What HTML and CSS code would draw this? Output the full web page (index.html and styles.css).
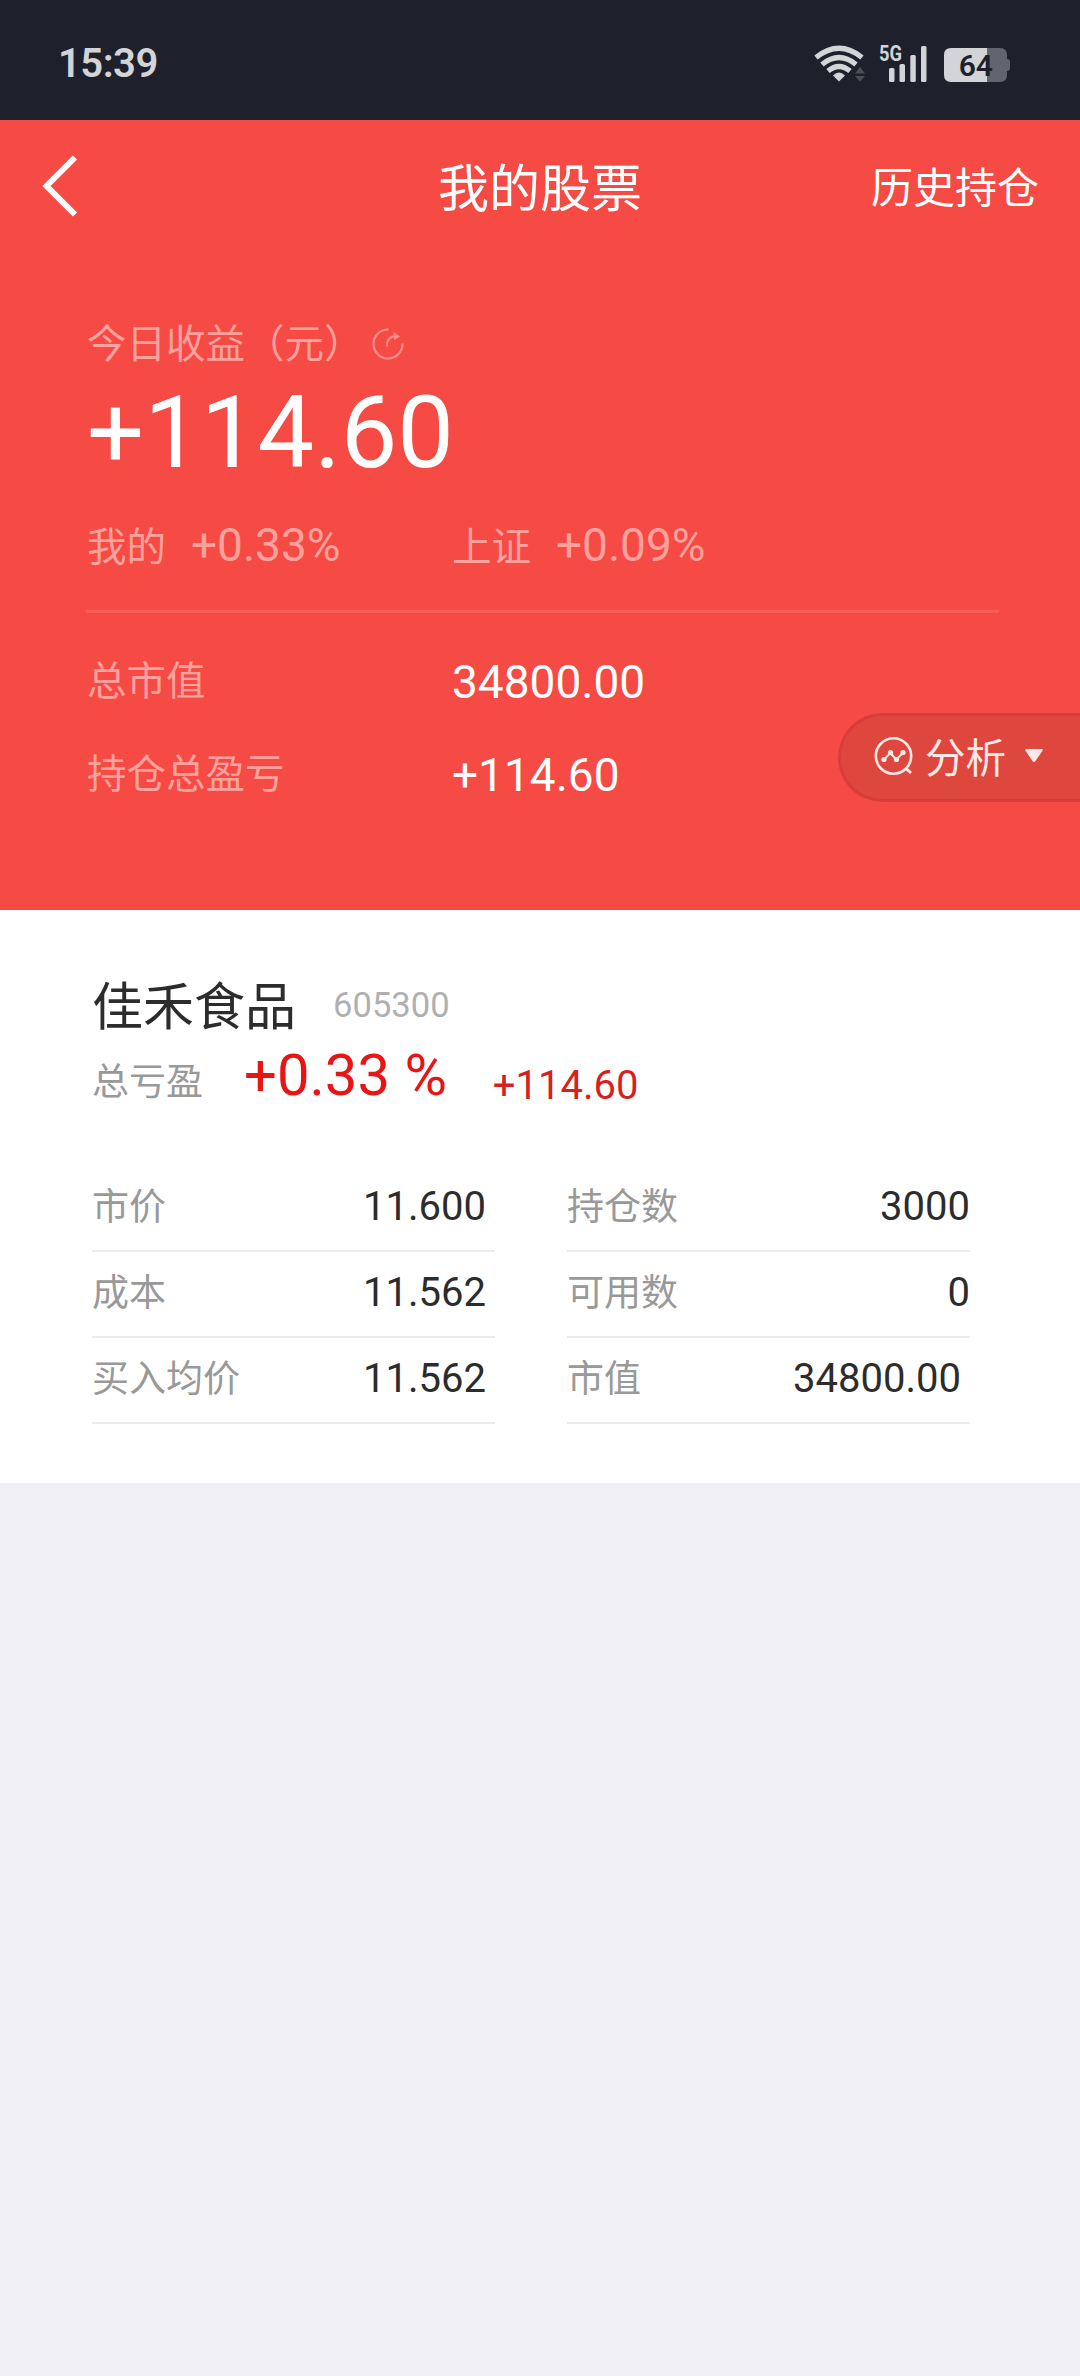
FILE: index.html
```html
<!DOCTYPE html>
<html lang="zh-CN">
<head>
<meta charset="utf-8">
<title>我的股票</title>
<link rel="stylesheet" href="styles.css">
</head>
<body>
<div class="status">
  <span class="clock">15:39</span>
  <svg class="status-icons" width="200" height="44" viewBox="812 42 200 44">
    <g fill="none" stroke="#d2d4d7" stroke-width="5.2">
      <path d="M816 57.5Q839 39 862 57.5"/>
      <path d="M822 64.5Q839 50.500 856 64.500"/>
      <path d="M828 71Q839 62 850 71"/>
    </g>
    <path d="M833 75.500Q839 69.500 845 75.500L839 81.500Z" fill="#d2d4d7"/>
    <path d="M855 73.500l5-6.500 5 6.500zM855 76l5 5.500 5-5.500z" fill="#4b4e57"/>
    <text class="net" x="879" y="61" textLength="23" lengthAdjust="spacingAndGlyphs">5G</text>
    <g fill="#d2d4d7">
      <rect x="889" y="68" width="5.500" height="14" rx="1.500"/>
      <rect x="899.500" y="64" width="5.500" height="18" rx="1.500"/>
      <rect x="910.300" y="55" width="5.500" height="27" rx="1.500"/>
      <rect x="921" y="46" width="5.500" height="36" rx="1.500"/>
    </g>
    <path d="M987 48h13q7 0 7 7v4q3 0 3 3v6q0 3-3 3v4q0 7-7 7h-13z" fill="#62656d"/>
    <path d="M987 48h-16-20q-7 0-7 7v20q0 7 7 7h36z" fill="#d2d4d7"/>
    <text class="level" x="975.800" y="76" text-anchor="middle">64</text>
  </svg>
</div>

<section class="hero">
  <header class="nav">
    <svg class="back" width="38" height="62" viewBox="0 0 38 62"><path d="M34 2.500L5.500 31 34 59.500" fill="none" stroke="#fff" stroke-width="6"/></svg>
    <h1 class="title">我的股票</h1>
    <span class="history">历史持仓</span>
  </header>
  <div class="summary">
    <div class="today">
      <span class="label">今日收益（元）</span>
      <svg width="34" height="34" viewBox="0 0 34 34" fill="none" stroke="#fa8f8b" stroke-width="2.200"><path d="M17.500 2.500A14.500 14.500 0 1 0 31.500 16.500"/><path d="M16 19.500q-.500-9 8-10.500"/><path d="M22.500 5l6.500 4.500-6 3.500z" fill="#fa8f8b" stroke="none"/></svg>
    </div>
    <div class="profit">+114.60</div>
    <div class="rates">
      <div class="rate"><span class="label">我的</span><span class="pct">+0.33%</span></div>
      <div class="rate"><span class="label">上证</span><span class="pct">+0.09%</span></div>
    </div>
    <div class="totals">
      <div class="total"><span class="label">总市值</span><span class="amount">34800.00</span></div>
      <div class="total"><span class="label">持仓总盈亏</span><span class="amount">+114.60</span></div>
    </div>
  </div>
  <div class="analyse">
    <svg width="42" height="42" viewBox="0 0 42 42" fill="none" stroke="#ffe9e7" stroke-width="2.600"><circle cx="20.500" cy="21" r="17.700"/><path d="M32.500 33l5.500 5" stroke-width="3"/><path d="M11 24.500l6.500-6.500 5.500 6.500 7-6.500" stroke-width="2"/><g fill="#ffe9e7" stroke="none"><circle cx="11" cy="24.500" r="2.600"/><circle cx="17.500" cy="17.500" r="2.600"/><circle cx="23.500" cy="24.500" r="2.600"/><circle cx="30" cy="17.500" r="2.600"/></g></svg>
    <span class="analyse-text">分析</span>
    <svg width="20" height="16" viewBox="0 0 20 16"><path d="M2.500 1h15q2 0 1 1.800L11.500 13q-1.500 2-3 0L1.500 2.800q-1-1.800 1-1.800z" fill="#ffe9e7"/></svg>
  </div>
</section>

<section class="stock">
  <div class="name-row"><span class="name">佳禾食品</span><span class="code">605300</span></div>
  <div class="gain-row"><span class="gain-label">总亏盈</span><span class="gain-pct">+0.33 %</span><span class="gain-amt">+114.60</span></div>
  <div class="grid">
    <div class="cell"><span class="key">市价</span><span class="val spaced">11.600</span></div>
    <div class="cell"><span class="key">持仓数</span><span class="val">3000</span></div>
    <div class="cell"><span class="key">成本</span><span class="val spaced">11.562</span></div>
    <div class="cell"><span class="key">可用数</span><span class="val">0</span></div>
    <div class="cell"><span class="key">买入均价</span><span class="val spaced">11.562</span></div>
    <div class="cell"><span class="key">市值</span><span class="val spaced">34800.00</span></div>
  </div>
</section>
</body>
</html>
```
FILE: styles.css
```css
* { box-sizing: border-box; }
body {
  margin: 0;
  min-height: 2376px;
  background: #efeff4;
  font-family: Roboto, "Noto Sans CJK SC", sans-serif;
}
svg { display: block; flex: none; }
span { white-space: nowrap; }

.status {
  display: flex;
  align-items: center;
  justify-content: space-between;
  height: 120px;
  padding: 8px 68px 0 58px;
  background: #1e212c;
}
.clock { font-size: 40px; font-weight: 600; line-height: 48px; letter-spacing: -0.5px; color: #d2d4d7; }
.net { font-size: 22px; font-weight: 700; fill: #d2d4d7; }
.level { font-size: 30px; font-weight: 600; fill: #1e212c; }

.hero {
  position: relative;
  height: 790px;
  background: #f64a45;
  color: #fff;
}
.nav {
  display: grid;
  grid-template-columns: 1fr auto 1fr;
  align-items: center;
  height: 132px;
  padding: 0 41px;
}
.title { margin: 0; padding-top: 7px; font-size: 51px; font-weight: 400; line-height: 60px; }
.history { justify-self: end; padding-top: 6px; font-size: 42px; line-height: 60px; }

.summary { padding: 60px 81px 0 87px; }
.label { font-size: 39.500px; line-height: 60px; color: #fda19d; }
.today { display: flex; align-items: center; gap: 7px; height: 60px; }
.today .label { padding-top: 5px; }
.today svg { margin-top: 4px; }
.profit { font-size: 100.800px; line-height: 120px; margin-top: 1px; }
.rates {
  display: grid;
  grid-template-columns: 365px 1fr;
  height: 98px;
  margin: 22px 0 0 -1px;
  padding-left: 1px;
  border-bottom: 3px solid #f95b57;
}
.rate { display: flex; height: 60px; gap: 25px; }
.rate .label { padding-top: 3px; }
.pct { font-size: 46px; line-height: 60px; color: #fda19d; }
.totals { padding-top: 38px; }
.total {
  display: grid;
  grid-template-columns: 365px 1fr;
  height: 93px;
}
.total .label { padding-top: 1px; }
.amount { font-size: 46px; line-height: 60px; padding-top: 1px; }

.analyse {
  position: absolute;
  top: 593px;
  right: 0;
  display: flex;
  align-items: center;
  width: 242px;
  height: 89px;
  padding: 0 0 3px 32px;
  border: 3px solid #d93d39;
  border-right: 0;
  border-radius: 45px 0 0 45px;
  background: #de473e;
  color: #ffe9e7;
}
.analyse-text { margin: 0 18px 0 10px; padding-top: 5px; font-size: 40.500px; line-height: 60px; }

.stock { height: 573px; padding: 65px 110px 0 92px; background: #fff; }
.name-row { display: flex; height: 60px; }
.name { padding-top: 3px; font-size: 51px; line-height: 60px; color: #2c2c2c; }
.code { margin-left: 37px; font-size: 34.600px; line-height: 60px; color: #b0b0b0; }
.gain-row { display: flex; height: 80px; }
.gain-label { padding-top: 18px; font-size: 37px; line-height: 60px; color: #999; }
.gain-pct { margin-left: 41px; font-size: 58px; line-height: 80px; color: #e91414; }
.gain-amt { margin-left: 46px; padding-top: 21px; font-size: 40px; line-height: 60px; color: #d81e1e; }
.grid {
  display: grid;
  grid-template-columns: 403px 403px;
  grid-auto-rows: 86px;
  column-gap: 72px;
  margin-top: 51px;
}
.cell {
  display: flex;
  align-items: center;
  justify-content: space-between;
  padding-bottom: 3px;
  border-bottom: 2px solid #ececec;
}
.key { padding-top: 3px; font-size: 37px; line-height: 60px; color: #999; }
.val { font-size: 40px; line-height: 60px; color: #2c2c2c; }
.spaced { padding-right: 9px; }
```
